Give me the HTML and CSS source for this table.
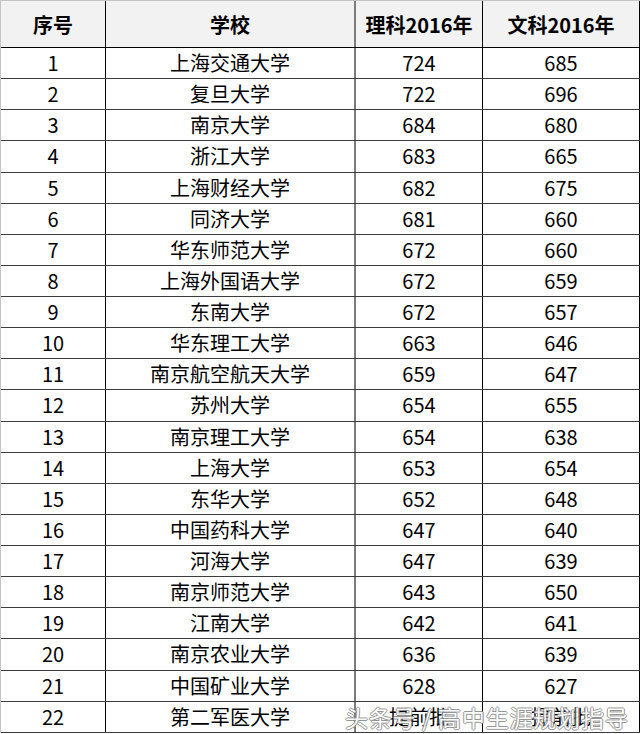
FILE: index.html
```html
<!DOCTYPE html>
<html lang="zh-CN">
<head>
<meta charset="utf-8">
<title>2016 录取分数</title>
<link rel="stylesheet" href="styles.css">
</head>
<body>
<div class="sheet">
  <div class="row head">
    <div class="cell c1">序号</div>
    <div class="cell c2">学校</div>
    <div class="cell c3">理科2016年</div>
    <div class="cell c4">文科2016年</div>
  </div>
  <div class="row"><div class="cell c1">1</div><div class="cell c2">上海交通大学</div><div class="cell c3">724</div><div class="cell c4">685</div></div>
  <div class="row"><div class="cell c1">2</div><div class="cell c2">复旦大学</div><div class="cell c3">722</div><div class="cell c4">696</div></div>
  <div class="row"><div class="cell c1">3</div><div class="cell c2">南京大学</div><div class="cell c3">684</div><div class="cell c4">680</div></div>
  <div class="row"><div class="cell c1">4</div><div class="cell c2">浙江大学</div><div class="cell c3">683</div><div class="cell c4">665</div></div>
  <div class="row"><div class="cell c1">5</div><div class="cell c2">上海财经大学</div><div class="cell c3">682</div><div class="cell c4">675</div></div>
  <div class="row"><div class="cell c1">6</div><div class="cell c2">同济大学</div><div class="cell c3">681</div><div class="cell c4">660</div></div>
  <div class="row"><div class="cell c1">7</div><div class="cell c2">华东师范大学</div><div class="cell c3">672</div><div class="cell c4">660</div></div>
  <div class="row"><div class="cell c1">8</div><div class="cell c2">上海外国语大学</div><div class="cell c3">672</div><div class="cell c4">659</div></div>
  <div class="row"><div class="cell c1">9</div><div class="cell c2">东南大学</div><div class="cell c3">672</div><div class="cell c4">657</div></div>
  <div class="row"><div class="cell c1">10</div><div class="cell c2">华东理工大学</div><div class="cell c3">663</div><div class="cell c4">646</div></div>
  <div class="row"><div class="cell c1">11</div><div class="cell c2">南京航空航天大学</div><div class="cell c3">659</div><div class="cell c4">647</div></div>
  <div class="row"><div class="cell c1">12</div><div class="cell c2">苏州大学</div><div class="cell c3">654</div><div class="cell c4">655</div></div>
  <div class="row"><div class="cell c1">13</div><div class="cell c2">南京理工大学</div><div class="cell c3">654</div><div class="cell c4">638</div></div>
  <div class="row"><div class="cell c1">14</div><div class="cell c2">上海大学</div><div class="cell c3">653</div><div class="cell c4">654</div></div>
  <div class="row"><div class="cell c1">15</div><div class="cell c2">东华大学</div><div class="cell c3">652</div><div class="cell c4">648</div></div>
  <div class="row"><div class="cell c1">16</div><div class="cell c2">中国药科大学</div><div class="cell c3">647</div><div class="cell c4">640</div></div>
  <div class="row"><div class="cell c1">17</div><div class="cell c2">河海大学</div><div class="cell c3">647</div><div class="cell c4">639</div></div>
  <div class="row"><div class="cell c1">18</div><div class="cell c2">南京师范大学</div><div class="cell c3">643</div><div class="cell c4">650</div></div>
  <div class="row"><div class="cell c1">19</div><div class="cell c2">江南大学</div><div class="cell c3">642</div><div class="cell c4">641</div></div>
  <div class="row"><div class="cell c1">20</div><div class="cell c2">南京农业大学</div><div class="cell c3">636</div><div class="cell c4">639</div></div>
  <div class="row"><div class="cell c1">21</div><div class="cell c2">中国矿业大学</div><div class="cell c3">628</div><div class="cell c4">627</div></div>
  <div class="row"><div class="cell c1">22</div><div class="cell c2">第二军医大学</div><div class="cell c3">提前批</div><div class="cell c4">提前批</div></div>
  <div class="watermark">头条号 / 高中生涯规划指导</div>
</div>
</body>
</html>
```
FILE: styles.css
```css
html, body {
  margin: 0;
  padding: 0;
  background: #ffffff;
}
body {
  font-family: "Noto Sans CJK SC", "Noto Sans", sans-serif;
  color: #000;
}
.sheet {
  position: relative;
  width: 640px;
  box-sizing: border-box;
  border-top: 1px solid #c4c4c4;
  border-left: 1px solid #c4c4c4;
}
.row {
  display: grid;
  grid-template-columns: 105px 250px 127px 157px;
  height: 31.14px;
  box-sizing: border-box;
  border-bottom: 1px solid #3c3c3c;
}
.row.head {
  height: 47px;
  background: #f2f2f2;
  border-bottom: 1px solid #000;
}
.cell {
  display: flex;
  align-items: center;
  justify-content: center;
  box-sizing: border-box;
  font-size: 20px;
  line-height: 1;
  border-right: 1px solid #000;
  white-space: nowrap;
}
.cell.c2 {
  border-right: 2px solid #7c7c7c;
}
.head .cell {
  font-weight: 700;
  padding-top: 2px;
}
.watermark {
  position: absolute;
  left: 344px;
  top: 701px;
  font-size: 23px;
  line-height: 30px;
  letter-spacing: 0.8px;
  color: #ffffff;
  white-space: nowrap;
  text-shadow: 1px 0 0 #8a8a8a, -1px 0 0 #8a8a8a, 0 1px 0 #8a8a8a, 0 -1px 0 #8a8a8a;
  opacity: 0.9;
}
```
